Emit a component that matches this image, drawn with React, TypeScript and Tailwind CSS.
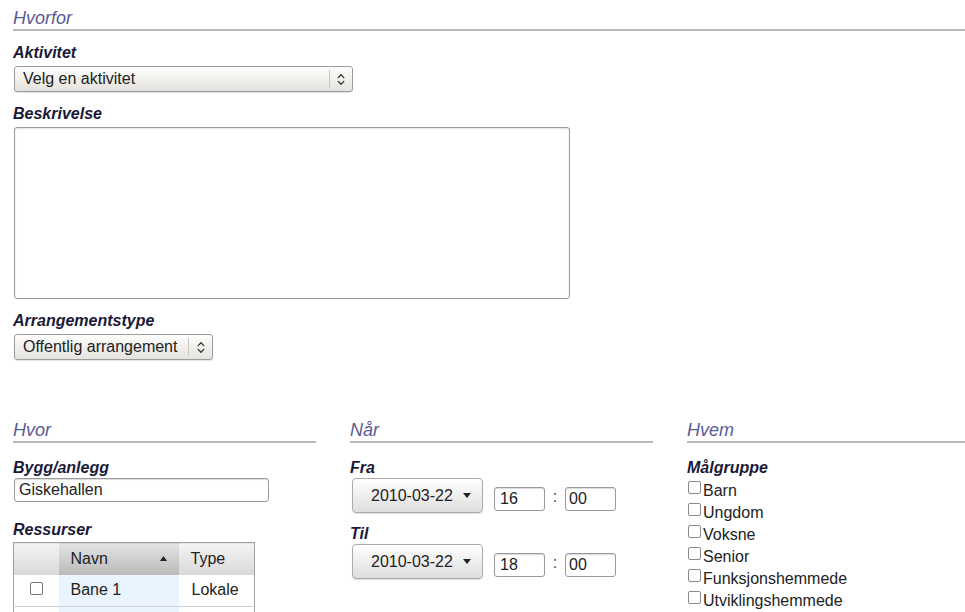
import React from 'react';

const FONT = { fontFamily: '"Liberation Sans", Arial, sans-serif' };

function Heading({ children }: { children: React.ReactNode }) {
    return (
        <div>
            <div className="text-[18px] leading-[22px] italic text-[#5b5b93] pt-[7px]">{children}</div>
            <div className="h-[2px] bg-[#b8b8b8]" />
        </div>
    );
}

function Label({ children, className = '' }: { children: React.ReactNode; className?: string }) {
    return <div className={`text-[16px] leading-[20px] font-bold italic text-[#1a1a38] ${className}`}>{children}</div>;
}

function UpDown() {
    return (
        <svg width="8" height="13" viewBox="0 0 8 13" fill="none" stroke="#333" strokeWidth="1.3" strokeLinecap="round" strokeLinejoin="round">
            <path d="M1.2 4.6 L4 1.8 L6.8 4.6" />
            <path d="M1.2 8.4 L4 11.2 L6.8 8.4" />
        </svg>
    );
}

function FakeSelect({ value, width, arrowW }: { value: string; width: string; arrowW: string }) {
    return (
        <div className={`relative h-[26px] ${width} rounded-[3px] border border-[#9c9c9c] bg-gradient-to-b from-[#fdfdfc] to-[#e5e3de] shadow-[0_1px_1px_rgba(0,0,0,0.12)]`}>
            <select className="appearance-none w-full h-full bg-transparent pl-[8px] text-[16px] text-[#222] outline-none">
                <option>{value}</option>
            </select>
            <div className={`absolute right-0 top-[3px] bottom-[3px] ${arrowW} border-l border-[#c8c6c1] flex items-center justify-center pointer-events-none`}>
                <UpDown />
            </div>
        </div>
    );
}

function TextInput({ value, className = '' }: { value: string; className?: string }) {
    return (
        <input
            readOnly
            value={value}
            className={`h-[24px] rounded-[3px] border border-[#9a9a9a] bg-white text-[16px] text-[#222] shadow-[inset_0_1px_1px_rgba(0,0,0,0.15)] outline-none ${className}`}
        />
    );
}

function DateButton() {
    return (
        <button className="h-[35px] w-[131px] rounded-[4px] border border-[#ababab] bg-gradient-to-b from-[#ffffff] to-[#dedede] shadow-[0_1px_1px_rgba(0,0,0,0.12)] flex items-center pl-[18px] text-[16px] text-[#222]">
            <span>2010-03-22</span>
            <svg width="8" height="5" viewBox="0 0 8 5" className="ml-[10px]">
                <path d="M0 0 H8 L4 5 Z" fill="#222" />
            </svg>
        </button>
    );
}

function TimeRow({ hour }: { hour: string }) {
    return (
        <div className="flex items-end">
            <DateButton />
            <TextInput value={hour} className="w-[51px] ml-[11px] mb-[2px] pl-[5px]" />
            <span className="w-[20px] text-center text-[16px] text-[#444] mb-[4px]">:</span>
            <TextInput value="00" className="w-[51px] mb-[2px] pl-[3px]" />
        </div>
    );
}

function Check({ className = '' }: { className?: string }) {
    return <span className={`inline-block w-[13px] h-[13px] rounded-[2px] border border-[#8a8a8a] bg-white shrink-0 ${className}`} />;
}

const groups = ['Barn', 'Ungdom', 'Voksne', 'Senior', 'Funksjonshemmede', 'Utviklingshemmede'];

export default function App() {
    return (
        <div className="w-[965px] h-[612px] overflow-hidden bg-white text-[#222]" style={FONT}>
            <div className="pl-[13px] w-[1000px]">
                <Heading>Hvorfor</Heading>

                <Label className="mt-[12px]">Aktivitet</Label>
                <div className="mt-[3px] pl-px">
                    <FakeSelect value="Velg en aktivitet" width="w-[339px]" arrowW="w-[23px]" />
                </div>

                <Label className="mt-[12px]">Beskrivelse</Label>
                <textarea className="mt-[3px] ml-px block w-[556px] h-[172px] resize-none rounded-[3px] border border-[#9a9a9a] bg-white shadow-[inset_0_1px_2px_rgba(0,0,0,0.12)] outline-none" />

                <Label className="mt-[12px]">Arrangementstype</Label>
                <div className="mt-[3px] pl-px">
                    <FakeSelect value="Offentlig arrangement" width="w-[199px]" arrowW="w-[24px]" />
                </div>

                <div className="mt-[52px] grid grid-cols-[303px_303px_303px] gap-x-[34px]">
                    {/* Hvor */}
                    <div>
                        <Heading>Hvor</Heading>
                        <Label className="mt-[15px]">Bygg/anlegg</Label>
                        <TextInput value="Giskehallen" className="ml-px w-[255px] pl-[4px] block" />

                        <Label className="mt-[18px]">Ressurser</Label>
                        <table className="mt-[2px] w-[242px] border-collapse border border-[#a0a0a0] text-[16px]">
                            <thead>
                                <tr className="h-[32px]">
                                    <th className="w-[45px] bg-gradient-to-b from-[#f4f4f4] to-[#d8d8d8]" />
                                    <th className="w-[120px] bg-gradient-to-b from-[#e4e4e4] to-[#b9b9b9] font-normal text-left pl-[12px]">
                                        <div className="flex items-center justify-between pr-[12px]">
                                            <span>Navn</span>
                                            <svg width="7" height="5" viewBox="0 0 7 5">
                                                <path d="M0 5 H7 L3.5 0 Z" fill="#222" />
                                            </svg>
                                        </div>
                                    </th>
                                    <th className="bg-gradient-to-b from-[#f4f4f4] to-[#d8d8d8] font-normal text-left pl-[12px]">Type</th>
                                </tr>
                            </thead>
                            <tbody>
                                <tr className="h-[32px] border-b border-[#d0d0d0]">
                                    <td className="text-center">
                                        <Check className="mt-[4px] border-[#777]" />
                                    </td>
                                    <td className="bg-[#eaf4fe] pl-[12px]">Bane 1</td>
                                    <td className="pl-[13px]">Lokale</td>
                                </tr>
                                <tr className="h-[32px]">
                                    <td />
                                    <td className="bg-[#eaf4fe]" />
                                    <td />
                                </tr>
                            </tbody>
                        </table>
                    </div>

                    {/* Når */}
                    <div>
                        <Heading>Når</Heading>
                        <Label className="mt-[15px]">Fra</Label>
                        <div className="pl-[2px]">
                            <TimeRow hour="16" />
                        </div>
                        <Label className="mt-[11px]">Til</Label>
                        <div className="pl-[2px]">
                            <TimeRow hour="18" />
                        </div>
                    </div>

                    {/* Hvem */}
                    <div>
                        <Heading>Hvem</Heading>
                        <Label className="mt-[15px]">Målgruppe</Label>
                        <div className="pl-px">
                            {groups.map((g) => (
                                <div key={g} className="flex items-start h-[22px] text-[16px]">
                                    <Check className="mt-[3px]" />
                                    <span className="ml-[2px] pt-[5px] leading-[16px]">{g}</span>
                                </div>
                            ))}
                        </div>
                    </div>
                </div>
            </div>
        </div>
    );
}
